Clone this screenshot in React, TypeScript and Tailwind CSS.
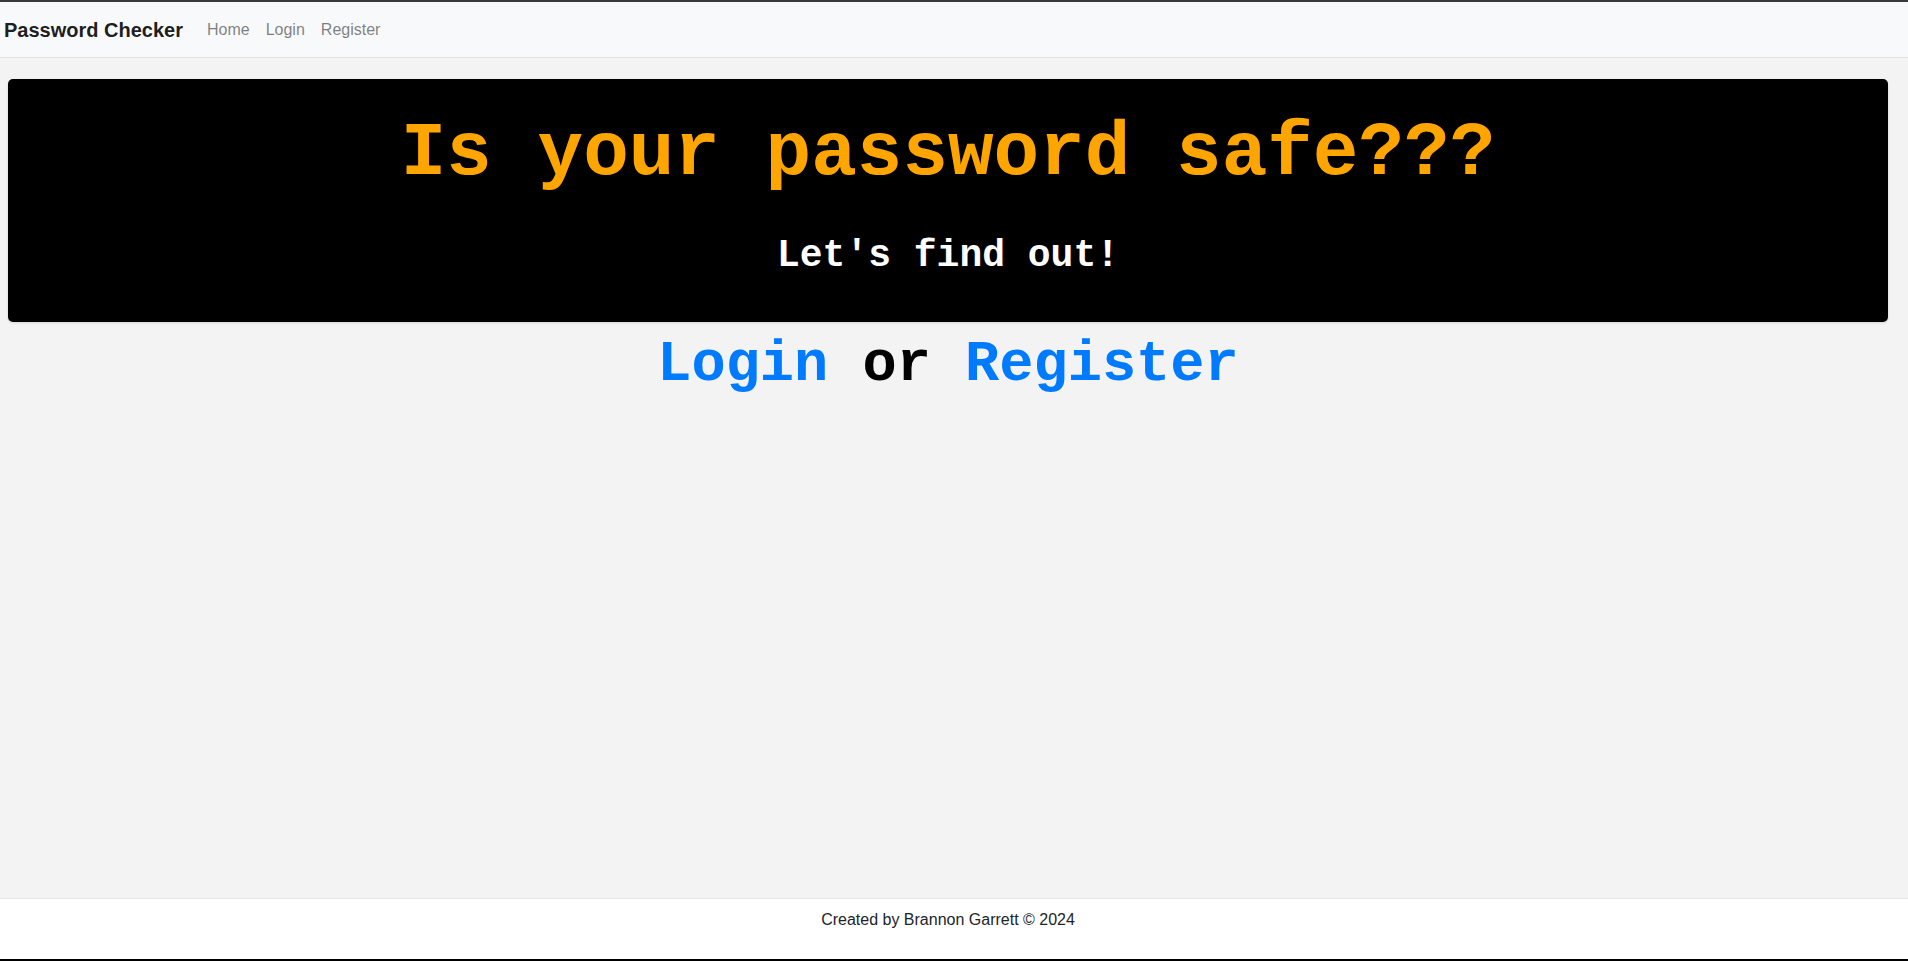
export default function App() {
  return (
    <div className="flex min-h-screen flex-col bg-[#f3f3f3] font-['Liberation_Sans',Arial,sans-serif]">
      {/* window edge */}
      <div className="h-[2px] w-full bg-[#3a3a3a]" />

      {/* navbar */}
      <nav className="flex h-[56px] items-center border-b border-[#e3e3e3] bg-[#f8f9fa] pl-[4px]">
        <span className="mr-[16px] py-[5px] text-[20px] font-bold leading-[30px] text-black/90">Password Checker</span>
        <a className="px-[8px] py-[8px] text-[16px] leading-[24px] text-black/50">Home</a>
        <a className="px-[8px] py-[8px] text-[16px] leading-[24px] text-black/50">Login</a>
        <a className="px-[8px] py-[8px] text-[16px] leading-[24px] text-black/50">Register</a>
      </nav>

      {/* main */}
      <main className="flex-1 pr-[12px] font-['Liberation_Mono','Courier_New',monospace]">
        <div className="mx-[8px] mt-[21px] rounded-[5px] bg-black pt-[30px] pb-[43px] text-center font-bold shadow-sm">
          <h1 className="text-[76px] leading-[91px] text-[#ffa500]">Is your password safe???</h1>
          <h2 className="mt-[33px] text-[38px] leading-[46px] text-white">Let's find out!</h2>
        </div>
        <h2 className="mt-[9px] text-center text-[57px] font-bold leading-[68px] text-black">
          <a className="text-[#007bff]">Login</a> or <a className="text-[#007bff]">Register</a>
        </h2>
      </main>

      {/* footer */}
      <footer className="h-[61px] border-t border-[#e6e6e6] bg-white pt-[9px] pr-[12px] text-center text-[16px] leading-[24px] text-[#212529]">
        Created by Brannon Garrett © 2024
      </footer>

      {/* window edge */}
      <div className="h-[2px] w-full bg-black" />
    </div>
  );
}
